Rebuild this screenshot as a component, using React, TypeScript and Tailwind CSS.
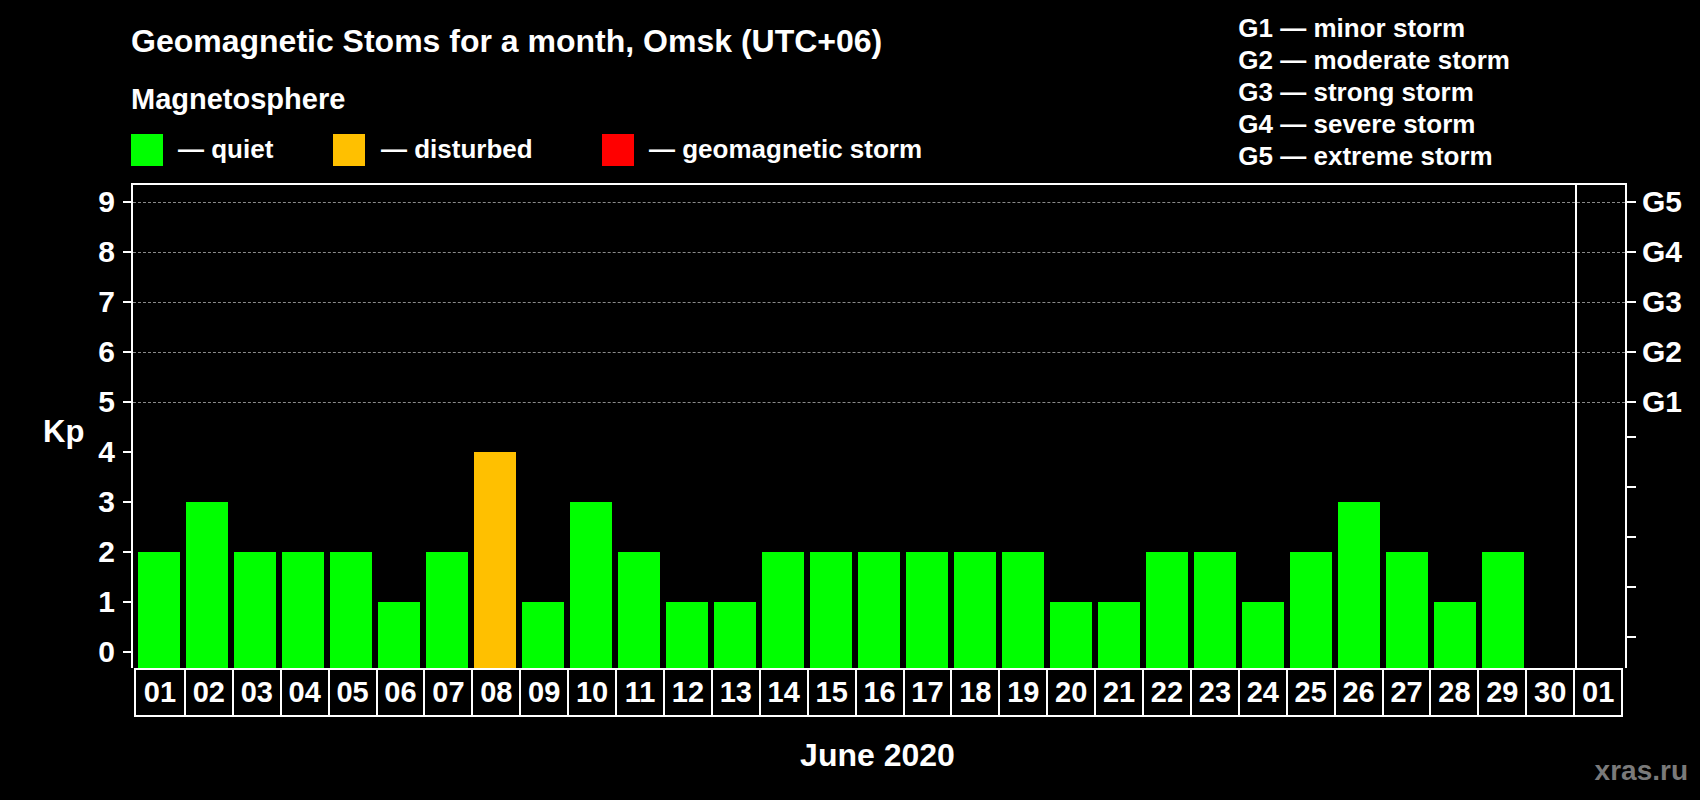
const days = ["01","02","03","04","05","06","07","08","09","10","11","12","13","14","15","16","17","18","19","20","21","22","23","24","25","26","27","28","29","30","01"];
const vals = [2,3,2,2,2,1,2,4,1,3,2,1,1,2,2,2,2,2,2,1,1,2,2,1,2,3,2,1,2,0,0];

export default function App() {
  const font = { fontFamily: '"Liberation Sans", Arial, sans-serif' };
  return (
    <div className="w-[1700px] h-[800px] bg-black text-white font-bold relative overflow-hidden" style={font}>
      {/* Header */}
      <div className="flex justify-between pl-[131px] pr-[190px] h-[183px]">
        <div className="flex flex-col">
          <div className="text-[32px] mt-[22px] leading-[38px]">Geomagnetic Stoms for a month, Omsk (UTC+06)</div>
          <div className="text-[29px] mt-[22px] leading-[34px]">Magnetosphere</div>
          <div className="flex items-center mt-[14px] text-[26px]">
            <div className="w-[32px] h-[32px] bg-[#00ff00]" />
            <span className="ml-[15px] w-[155px]">— quiet</span>
            <div className="w-[32px] h-[32px] bg-[#ffc000]" />
            <span className="ml-[16px] w-[221px]">— disturbed</span>
            <div className="w-[32px] h-[32px] bg-[#ff0000]" />
            <span className="ml-[15px]">— geomagnetic storm</span>
          </div>
        </div>
        <div className="flex flex-col text-[26px] leading-[32px] mt-[12px]">
          <div>G1 — minor storm</div>
          <div>G2 — moderate storm</div>
          <div>G3 — strong storm</div>
          <div>G4 — severe storm</div>
          <div>G5 — extreme storm</div>
        </div>
      </div>

      {/* Chart */}
      <div className="flex">
        {/* Left axis */}
        <div className="w-[131px] h-[485px] relative">
          <div className="absolute left-[43px] top-[226px] text-[31px]">Kp</div>
          {[9,8,7,6,5,4,3,2,1,0].map((v) => (
            <div key={v} className="absolute right-0 flex items-center" style={{ top: 19 + (9 - v) * 50 - 16 }}>
              <span className="text-[30px] leading-[32px] mr-[8px]">{v}</span>
              <div className="w-[8px] h-[2px] bg-white" />
            </div>
          ))}
        </div>
        {/* Plot + labels */}
        <div className="flex flex-col">
          <div className="w-[1496px] h-[485px] border-l-2 border-t-2 border-r-2 border-white relative flex items-end pl-[2px]">
            {[9,8,7,6,5].map((v) => (
              <div key={v} className="absolute left-0 right-0 border-t border-dashed border-[#8a8a8a]" style={{ top: 17 + (9 - v) * 50 }} />
            ))}
            {vals.map((v, i) => (
              <div key={i} className={"w-[48px] h-full flex items-end justify-center relative " + (i === 30 ? "border-l-2 border-white" : "")}>
                {v > 0 && (
                  <div className={"w-[42px] " + (v >= 4 ? "bg-[#ffc000]" : "bg-[#00ff00]")} style={{ height: 16 + v * 50 }} />
                )}
              </div>
            ))}
          </div>
          <div className="flex w-[1489px] h-[49px] ml-[3px] border-2 border-white">
            {days.map((d, i) => (
              <div key={i} className={"w-[48px] flex items-center justify-center text-[29px] " + (i > 0 ? "border-l-2 border-white" : "")}>{d}</div>
            ))}
          </div>
        </div>
        {/* Right axis */}
        <div className="h-[485px] relative w-[70px]">
          {[9,8,7,6,5,4,3,2,1,0].map((v) => (
            <div key={v} className="absolute left-0 flex items-center" style={{ top: 19 + (9 - v) * 50 - 16 }}>
              <div className="w-[9px] h-[2px] bg-white" />
              {v >= 5 && <span className="text-[30px] leading-[32px] ml-[6px]">G{v - 4}</span>}
            </div>
          ))}
        </div>
      </div>

      <div className="text-center text-[32px] mt-[14px] w-[1755px]">June 2020</div>
      <div className="absolute right-[12px] bottom-[8px] text-[28px] text-[#7a7a7a]">xras.ru</div>
    </div>
  );
}
